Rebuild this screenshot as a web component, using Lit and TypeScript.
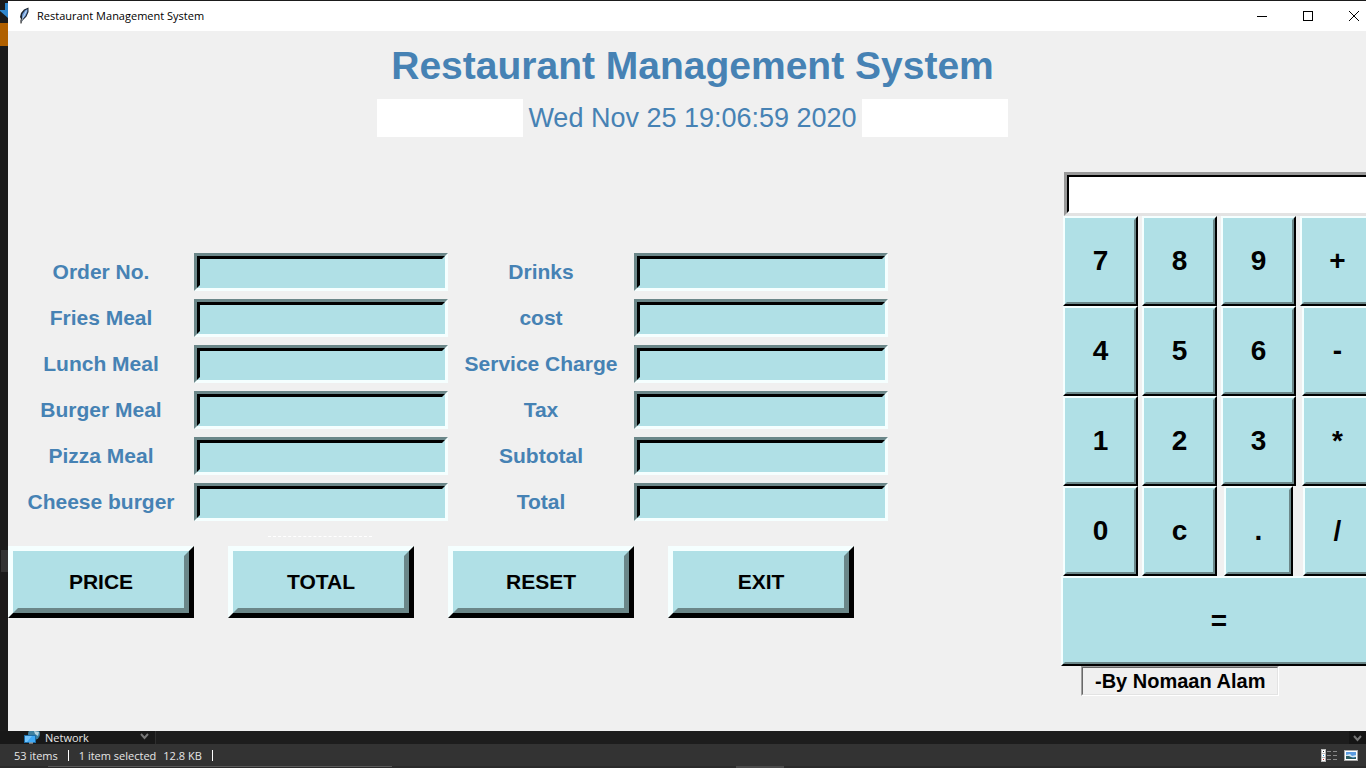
import { LitElement, html, css, svg } from "lit";
import { customElement, state } from "lit/decorators.js";

interface Field {
  id: string;
  label: string;
}

interface Key {
  char: string;
  size: string;
}

const FIELDS: Field[] = [
  { id: "order", label: "Order No." },
  { id: "drinks", label: "Drinks" },
  { id: "fries", label: "Fries Meal" },
  { id: "cost", label: "cost" },
  { id: "lunch", label: "Lunch Meal" },
  { id: "service", label: "Service Charge" },
  { id: "burger", label: "Burger Meal" },
  { id: "tax", label: "Tax" },
  { id: "pizza", label: "Pizza Meal" },
  { id: "subtotal", label: "Subtotal" },
  { id: "cheese", label: "Cheese burger" },
  { id: "total", label: "Total" },
];

const ACTIONS = ["PRICE", "TOTAL", "RESET", "EXIT"];

const KEYS: Key[] = [
  { char: "7", size: "full" },
  { char: "8", size: "full" },
  { char: "9", size: "full" },
  { char: "+", size: "full" },
  { char: "4", size: "full" },
  { char: "5", size: "full" },
  { char: "6", size: "full" },
  { char: "-", size: "slim" },
  { char: "1", size: "full" },
  { char: "2", size: "full" },
  { char: "3", size: "full" },
  { char: "*", size: "slim" },
  { char: "0", size: "full" },
  { char: "c", size: "full" },
  { char: ".", size: "thin" },
  { char: "/", size: "thin" },
  { char: "=", size: "wide" },
];

const feather = svg`
  <path d="M3 16 L3.5 13 L2 10 L3 6 L6 2.5 L10.5 0.5 L10.5 5 L8.5 9.5 L5 13 Z" fill="#1b2430"/>
  <path d="M4 10.5 L4.3 7 L7 3.5 L9.5 2 L9.3 5 L7.5 9 L5 11.5 Z" fill="#6f9fdc"/>
  <path d="M3 15 L8.5 3.5" stroke="#d7e6f7" stroke-width="0.8" fill="none"/>
  <path d="M3 12.5 V16.5" stroke="#111" stroke-width="1" fill="none"/>`;

@customElement("title-bar")
export class TitleBar extends LitElement {
  static styles = css`
    :host {
      display: flex;
      align-items: stretch;
      height: 30px;
      background: #fff;
      font: 11px/30px "Open Sans", "Noto Sans", sans-serif;
      color: #000;
    }
    .logo {
      align-self: center;
      margin: 0 7px 0 10px;
    }
    .name {
      flex: 1;
    }
    .control {
      display: grid;
      place-items: center;
      width: 46px;
      padding: 0;
      border: 0;
      background: none;
    }
  `;

  render() {
    return html`
      <svg class="logo" width="12" height="18" viewBox="0 0 12 18">${feather}</svg>
      <span class="name">Restaurant Management System</span>
      <button class="control" aria-label="Minimize">
        <svg width="10" height="10" viewBox="0 0 10 10"><path d="M0 5.5H10" stroke="#000" /></svg>
      </button>
      <button class="control" aria-label="Maximize">
        <svg width="10" height="10" viewBox="0 0 10 10">
          <rect x="0.5" y="0.5" width="9" height="9" fill="none" stroke="#000" />
        </svg>
      </button>
      <button class="control" aria-label="Close">
        <svg width="10" height="10" viewBox="0 0 10 10">
          <path d="M0 0L10 10M10 0L0 10" stroke="#000" />
        </svg>
      </button>
    `;
  }
}

@customElement("order-form")
export class OrderForm extends LitElement {
  static styles = css`
    :host {
      display: block;
      font-family: "Liberation Sans", Arial, sans-serif;
    }
    .fields {
      display: grid;
      grid-template-columns: 186px 254px 186px 254px;
      row-gap: 8px;
    }
    .label {
      font-size: 21px;
      font-weight: bold;
      line-height: 38px;
      text-align: center;
      color: #4682b4;
    }
    .entry {
      display: flex;
      height: 32px;
      border: 3px solid;
      border-color: #6b8789 #f5ffff #f5ffff #6b8789;
    }
    .input {
      flex: 1;
      min-width: 0;
      box-sizing: border-box;
      margin: 0;
      padding: 0 4px;
      border: 3px solid;
      border-color: #000 #b0e0e6 #b0e0e6 #000;
      border-radius: 0;
      outline: 0;
      background: #b0e0e6;
      font: bold 21px "Liberation Sans", Arial, sans-serif;
      color: #4682b4;
    }
    .divider {
      width: 104px;
      margin: 15px 0 9px 260px;
      border: 0;
      border-top: 1px dashed #fff;
    }
    .actions {
      display: grid;
      grid-template-columns: repeat(4, 186px);
      gap: 34px;
    }
    .action {
      display: flex;
      height: 72px;
      padding: 0;
      border: 5px solid;
      border-color: #f5ffff #000 #000 #f5ffff;
      background: #b0e0e6;
      font: bold 21px "Liberation Sans", Arial, sans-serif;
      color: #000;
    }
    .face {
      flex: 1;
      align-self: stretch;
      display: grid;
      place-items: center;
      border: 5px solid;
      border-color: #b0e0e6 #6b8789 #6b8789 #b0e0e6;
    }
  `;

  render() {
    return html`
      <div class="fields">
        ${FIELDS.map(
          (f) => html`
            <label class="label" for=${f.id}>${f.label}</label>
            <div class="entry"><input class="input" id=${f.id} type="text" /></div>
          `
        )}
      </div>
      <hr class="divider" />
      <div class="actions">
        ${ACTIONS.map(
          (name) => html`<button class="action"><span class="face">${name}</span></button>`
        )}
      </div>
    `;
  }
}

@customElement("calc-pad")
export class CalcPad extends LitElement {
  @state() private expression = "";

  static styles = css`
    :host {
      display: block;
      width: 316px;
      font-family: "Liberation Sans", Arial, sans-serif;
    }
    .screen {
      display: flex;
      height: 38px;
      margin: 0 3px;
      border: 3px solid;
      border-color: #999 #e3e3e3 #e3e3e3 #999;
    }
    .display {
      flex: 1;
      min-width: 0;
      margin: 0;
      padding: 0 4px;
      border: 2px solid;
      border-color: #000 #fff #fff #000;
      outline: 0;
      background: #fff;
      font: bold 28px "Liberation Sans", Arial, sans-serif;
      text-align: right;
    }
    .keys {
      display: grid;
      grid-template-columns: repeat(4, 79px);
      grid-auto-rows: 90px;
      justify-items: center;
    }
    .key {
      display: flex;
      width: 75px;
      padding: 0;
      border: 2px solid;
      border-color: #f5ffff #000 #000 #f5ffff;
      background: #b0e0e6;
      font: bold 28px "Liberation Sans", Arial, sans-serif;
      color: #000;
    }
    .slim {
      width: 71px;
    }
    .thin {
      width: 69px;
    }
    .wide {
      grid-column: 1 / -1;
      width: 100%;
    }
    .face {
      flex: 1;
      align-self: stretch;
      display: grid;
      place-items: center;
      border: 2px solid;
      border-color: #b0e0e6 #6b8789 #6b8789 #b0e0e6;
    }
    .credit {
      width: fit-content;
      margin-left: 20px;
      border: 1px solid;
      border-color: #a0a0a0 #fff #fff #a0a0a0;
    }
    .author {
      display: block;
      padding: 0 12px;
      border: 1px solid;
      border-color: #696969 #e3e3e3 #e3e3e3 #696969;
      font-size: 20px;
      font-weight: bold;
      line-height: 26px;
      color: #000;
    }
  `;

  private press(char: string) {
    this.expression = char === "c" ? "" : this.expression + char;
  }

  render() {
    return html`
      <div class="screen">
        <input class="display" type="text" aria-label="Calculator" .value=${this.expression} />
      </div>
      <div class="keys">
        ${KEYS.map(
          (k) => html`
            <button class="key ${k.size}" @click=${() => this.press(k.char)}>
              <span class="face">${k.char}</span>
            </button>
          `
        )}
      </div>
      <div class="credit"><span class="author">-By Nomaan Alam</span></div>
    `;
  }
}

@customElement("explorer-footer")
export class ExplorerFooter extends LitElement {
  static styles = css`
    :host {
      display: block;
      font: 11px "Open Sans", "Noto Sans", sans-serif;
      color: #e6e6e6;
    }
    .tree {
      display: flex;
      height: 13px;
      background: #1d1d1d;
      line-height: 13px;
    }
    .node {
      display: flex;
      box-sizing: border-box;
      width: 156px;
      padding: 0 6px 0 24px;
      border-right: 1px solid #2e2e2e;
      background: #181818;
    }
    .label {
      flex: 1;
      margin-left: 5px;
    }
    .space {
      flex: 1;
    }
    .scroll {
      padding: 0 4px;
      background: #151515;
    }
    .status {
      display: flex;
      align-items: center;
      height: 22px;
      padding: 0 8px 0 14px;
      background: #333;
    }
    .bar {
      width: 1px;
      height: 11px;
      margin: 0 10px;
      background: #fff;
    }
    .size {
      margin-left: 7px;
    }
    .view {
      display: grid;
      padding: 0;
      margin-left: 7px;
      border: 0;
      background: none;
    }
    .edge {
      display: flex;
      height: 2px;
      padding-left: 48px;
      background: #2b2b2b;
    }
    .search {
      width: 344px;
      height: 1px;
      background: #5a5a5a;
    }
    .task {
      width: 48px;
      margin-left: 344px;
      background: #4a4a4a;
    }
  `;

  render() {
    const chevron = svg`<path d="M1 3L4.5 7L8 3" fill="none" stroke="#777" stroke-width="2"/>`;
    return html`
      <div class="tree">
        <div class="node">
          <svg width="16" height="13" viewBox="0 0 16 13">
            <circle cx="10" cy="3" r="6" fill="#3c7f9f" />
            <path d="M10 0L15 1L14 5L11 3Z" fill="#b5d3df" />
            <rect x="0.5" y="4.5" width="11" height="7" fill="#3fa9f5" stroke="#1b6ba5" />
            <path d="M1 5H8L3 11H1Z" fill="#74c3fa" />
            <path d="M5 12H9" stroke="#ccc" />
          </svg>
          <span class="label">Network</span>
          <svg width="9" height="9" viewBox="0 0 9 9">${chevron}</svg>
        </div>
        <span class="space"></span>
        <div class="scroll"><svg width="9" height="9" viewBox="0 0 9 9">${chevron}</svg></div>
      </div>
      <div class="status">
        <span>53 items</span>
        <span class="bar"></span>
        <span>1 item selected</span>
        <span class="size">12.8 KB</span>
        <span class="bar"></span>
        <span class="space"></span>
        <button class="view" aria-label="Details">
          <svg width="16" height="13" viewBox="0 0 16 13">
            <rect x="0" y="0" width="5" height="13" fill="#b8b8b8" />
            <path d="M1 1h3v3h-3zM1 5h3v3h-3zM1 9h3v3h-3z" fill="#fff" />
            <path d="M2 2h1v1h-1z" fill="#333" />
            <path d="M2 6h1v1h-1z" fill="#1e90d0" />
            <path d="M2 10h1v1h-1z" fill="#d02020" />
            <path d="M6 2.5H10M12 2.5H16M6 6.5H10M12 6.5H16M6 10.5H10M12 10.5H16" stroke="#8a8a8a" />
          </svg>
        </button>
        <button class="view" aria-label="Large icons">
          <svg width="14" height="11" viewBox="0 0 14 11">
            <rect x="0.5" y="0.5" width="13" height="10" fill="#fff" stroke="#a8a8a8" />
            <rect x="2" y="2" width="10" height="7" fill="#5b9be0" />
            <path d="M2 5L6 4L8 6L12 5V7H2Z" fill="#d5e8f2" />
            <path d="M2 6L5 6L9 8L12 7V9H2Z" fill="#2b5d63" />
          </svg>
        </button>
      </div>
      <div class="edge"><span class="search"></span><span class="task"></span></div>
    `;
  }
}

@customElement("app-root")
export class AppRoot extends LitElement {
  static styles = css`
    :host {
      display: flex;
      flex-direction: column;
      height: 100vh;
      overflow: hidden;
      background: #1b1b1b;
      font-family: "Liberation Sans", Arial, sans-serif;
    }
    .desktop {
      flex: 1;
      display: flex;
      min-height: 0;
      padding-top: 1px;
    }
    .strip {
      flex: none;
      display: flex;
      flex-direction: column;
      width: 8px;
    }
    .arrow {
      height: 22px;
      flex: none;
    }
    .tab {
      height: 23px;
      background: #b06000;
    }
    .thumb {
      height: 22px;
      margin: 504px 0 0 1px;
      background: #333;
    }
    .window {
      flex: none;
      width: calc(100% + 3px);
      background: #f0f0f0;
      color: #4682b4;
    }
    .heading {
      margin: 0;
      padding: 10px 0 8px;
      font-size: 39px;
      line-height: 50px;
      text-align: center;
    }
    .clock {
      display: flex;
      justify-content: center;
      gap: 5px;
      font-size: 27px;
      line-height: 38px;
    }
    .blank {
      width: 146px;
      background: #fff;
    }
    .body {
      display: flex;
      justify-content: space-between;
      align-items: flex-start;
      margin-top: 35px;
    }
    .form {
      margin-top: 81px;
    }
  `;

  render() {
    return html`
      <div class="desktop">
        <div class="strip">
          <svg class="arrow" width="8" height="22" viewBox="0 0 8 22">
            <path d="M5 2H8V17L0 10V9H5Z" fill="#2f86cc" />
          </svg>
          <span class="tab"></span>
          <span class="thumb"></span>
        </div>
        <main class="window">
          <title-bar></title-bar>
          <h1 class="heading">Restaurant Management System</h1>
          <div class="clock">
            <span class="blank"></span>
            <time>Wed Nov 25 19:06:59 2020</time>
            <span class="blank"></span>
          </div>
          <div class="body">
            <order-form class="form"></order-form>
            <calc-pad></calc-pad>
          </div>
        </main>
      </div>
      <explorer-footer></explorer-footer>
    `;
  }
}
